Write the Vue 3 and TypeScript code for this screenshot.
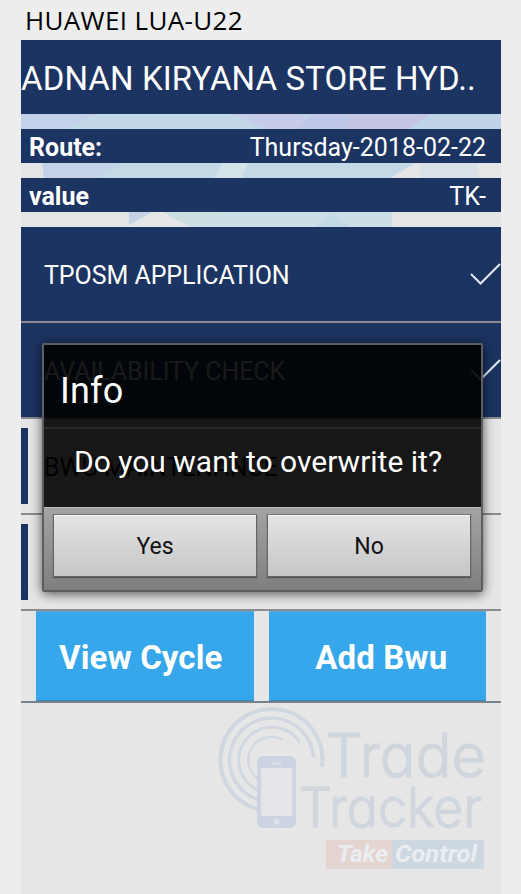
<script setup lang="ts">
interface Task {
  label: string
  done: boolean
}

const device = 'HUAWEI LUA-U22'
const store = 'ADNAN KIRYANA STORE HYD..'
const details = [
  { name: 'Route:', value: 'Thursday-2018-02-22' },
  { name: 'value', value: 'TK-' },
]
const tasks: Task[] = [
  { label: 'TPOSM APPLICATION', done: true },
  { label: 'AVAILABILITY CHECK', done: true },
  { label: 'BWU MAINTENANCE', done: false },
  { label: '', done: false },
]
const rings = [
  'M322 767 A51 51 0 1 0 257.500 809',
  'M313.500 757 A42 42 0 1 0 257.500 799.600',
  'M300 743 A33 33 0 1 0 257.500 790',
  'M283 740 A23 23 0 0 0 257.500 778.200',
]
</script>

<template>
  <div class="page">
    <header class="device">{{ device }}</header>
    <main class="phone">
      <h1 class="store">{{ store }}</h1>

      <section class="details">
        <svg class="mosaic" viewBox="21 114 480 113" preserveAspectRatio="none" aria-hidden="true">
          <rect x="21" y="114" width="480" height="113" fill="#e3e5e7" />
          <path d="M21 114H501V129H21z" fill="#c3d2ea" />
          <path d="M96 114H232L260 129H66z" fill="#c2d8e6" />
          <path d="M240 114H300L315 129H266z" fill="#c5cbe9" />
          <path d="M314 114H350L372 129H296z" fill="#bfc8e6" />
          <path d="M350 114H430L408 129H346z" fill="#c5c6e3" />
          <path d="M430 114H501L490 129H410z" fill="#bed4e6" />
          <path d="M42 163H415L390 178H44z" fill="#c3d9e6" />
          <path d="M42 163H120L95 178H44z" fill="#c4d2e7" />
          <path d="M222 163H248L242 178H214z" fill="#d3e3e7" />
          <path d="M420 163H478V178H420z" fill="#d9e0e7" />
          <path d="M129 212H152L129 225z" fill="#c4d2e4" />
          <path d="M164 212H392V227H190z" fill="#ccdfe7" />
          <path d="M164 212H225L205 222H180z" fill="#cbdfe1" />
          <path d="M315 227L332 212L350 227z" fill="#c2dbe5" />
        </svg>
        <div class="detail-list">
          <div v-for="d in details" :key="d.name" class="detail">
            <b>{{ d.name }}</b>
            <span>{{ d.value }}</span>
          </div>
        </div>
      </section>

      <ul class="tasks">
        <li v-for="(t, i) in tasks" :key="i" class="task" :class="{ done: t.done }">
          <span class="label">{{ t.label }}</span>
          <svg v-if="t.done" class="check" viewBox="0 0 31 24" aria-hidden="true">
            <path d="M1 12 L10.500 21.500 L30 2" />
          </svg>
        </li>
      </ul>

      <div class="actions">
        <button class="action view">View Cycle</button>
        <button class="action add">Add Bwu</button>
      </div>

      <svg class="brand" viewBox="21 703 480 191" aria-hidden="true">
        <g fill="none" stroke="#d0d7e0">
          <path v-for="(r, i) in rings" :key="i" :d="r" :stroke-width="4 - i * 0.6" />
        </g>
        <rect x="257" y="756" width="39" height="72" rx="6" fill="#cdd4e1" />
        <rect x="261" y="768" width="31" height="48" fill="#e4e6e9" />
        <path d="M272 763.500H281" stroke="#e0e3e9" stroke-width="2" />
        <circle cx="276.500" cy="821.500" r="3" fill="#e0e3e9" />
        <g class="wordmark">
          <text x="325" y="777" font-size="61" textLength="161" lengthAdjust="spacingAndGlyphs">Trade</text>
          <text x="299" y="827" font-size="55" textLength="183" lengthAdjust="spacingAndGlyphs">Tracker</text>
        </g>
        <rect x="326" y="840" width="66" height="29" fill="#e5d5d1" />
        <rect x="392" y="840" width="92" height="29" fill="#cdd7e1" />
        <g class="tagline">
          <text x="337" y="862" textLength="51" lengthAdjust="spacingAndGlyphs">Take</text>
          <text x="395" y="862" textLength="82" lengthAdjust="spacingAndGlyphs">Control</text>
        </g>
      </svg>
    </main>

    <div class="dialog" role="dialog">
      <h2 class="dialog-title">Info</h2>
      <p class="dialog-text">Do you want to overwrite it?</p>
      <div class="dialog-buttons">
        <button class="choice">Yes</button>
        <button class="choice">No</button>
      </div>
    </div>
  </div>
</template>

<style>
body {
  background: #ededed;
}
</style>

<style scoped>
.page {
  position: relative;
  box-sizing: border-box;
  width: 521px;
  height: 894px;
  padding: 0 20px 0 21px;
  overflow: hidden;
  background: #ededed;
  font-family: Roboto, 'Liberation Sans', sans-serif;
}
.device {
  height: 40px;
  padding-left: 4px;
  font: 370 26px/41px 'Open Sans', 'Noto Sans', sans-serif;
  letter-spacing: 0.35px;
  white-space: nowrap;
  color: #000;
}
.phone {
  width: 480px;
  height: 854px;
  background: #e6e6e6;
}
.store {
  height: 74px;
  margin: 0;
  background: #1c3461;
  color: #fff;
  font-size: 33px;
  font-weight: 400;
  line-height: 77px;
  letter-spacing: 0.11px;
  white-space: nowrap;
}
.details {
  display: grid;
  height: 113px;
}
.mosaic,
.detail-list {
  grid-area: 1 / 1;
  width: 480px;
  height: 113px;
}
.detail-list {
  z-index: 1;
  display: flex;
  flex-direction: column;
  gap: 15px;
  box-sizing: border-box;
  padding: 15px 0;
}
.detail {
  display: flex;
  justify-content: space-between;
  height: 34px;
  padding: 0 15px 0 8px;
  background: #1c3461;
  color: #fff;
  font-size: 25px;
  line-height: 37px;
}
.tasks {
  margin: 0;
  padding: 0;
  list-style: none;
}
.task {
  display: flex;
  align-items: center;
  justify-content: space-between;
  box-sizing: border-box;
  height: 96px;
  padding: 9px 0;
  border-bottom: 2px solid #8a8b91;
  color: #111;
  font-size: 25px;
  letter-spacing: -0.06px;
  white-space: nowrap;
}
.task::before {
  content: '';
  align-self: stretch;
  width: 7px;
  background: #1c3461;
}
.task.done {
  background: #1c3461;
  color: #fff;
}
.label {
  flex: 1;
  padding: 3px 0 0 16px;
}
.check {
  width: 31px;
  height: 24px;
  fill: none;
  stroke: #e3eefb;
  stroke-width: 2;
}
.actions {
  display: flex;
  gap: 15px;
  height: 90px;
  padding: 0 15px;
  border-bottom: 2px solid #77828b;
}
.action {
  flex: 1;
  border: 0;
  background: #35a7ea;
  box-shadow: inset 0 1px #5ba9ce, inset 0 -1px #3289c0;
  color: #fff;
  font: bold 33px Roboto, sans-serif;
  letter-spacing: 0.1px;
}
.action.view {
  padding: 3px 8px 0 0;
}
.action.add {
  padding: 3px 0 0 8px;
}
.brand {
  display: block;
  width: 480px;
  height: 191px;
}
.wordmark {
  fill: #d0d6dd;
  stroke: #d0d6dd;
  stroke-width: 1.2px;
  font-family: Inter, Lato, sans-serif;
  font-weight: 300;
  font-feature-settings: 'cv11';
}
.tagline {
  fill: #ebeef1;
  font: italic bold 24px Roboto, sans-serif;
}
.dialog {
  position: absolute;
  top: 343px;
  left: 42px;
  box-sizing: border-box;
  width: 441px;
  height: 249px;
  border: 2px solid #5d5e60;
  border-radius: 2px;
  background: rgba(0, 0, 0, 0.9);
  background-clip: padding-box;
  box-shadow: 0 2px 12px rgba(0, 0, 0, 0.65);
  color: #fff;
}
.dialog-title {
  box-sizing: border-box;
  height: 84px;
  margin: 0;
  padding-left: 16px;
  border-bottom: 2px solid #2b2b2b;
  font-size: 36px;
  font-weight: 400;
  line-height: 92px;
  letter-spacing: 0.2px;
}
.dialog-text {
  height: 78px;
  margin: 0;
  padding-left: 30px;
  font-size: 30px;
  line-height: 65px;
  white-space: nowrap;
}
.dialog-buttons {
  display: flex;
  gap: 10px;
  box-sizing: border-box;
  height: 83px;
  padding: 6px 10px 13px 9px;
  border-top: 1px solid #bcbcbc;
  background: linear-gradient(#a3a3a3, #7f7f7f);
}
.choice {
  flex: 1;
  padding: 2px 0 0;
  border: 1px solid #666;
  border-top-color: #777;
  background: linear-gradient(#e4e4e4, #c6c6c6);
  box-shadow: inset 0 1px #f3f3f3, 0 1px 1px #555;
  color: #111;
  font: 23px Roboto, sans-serif;
}
</style>
